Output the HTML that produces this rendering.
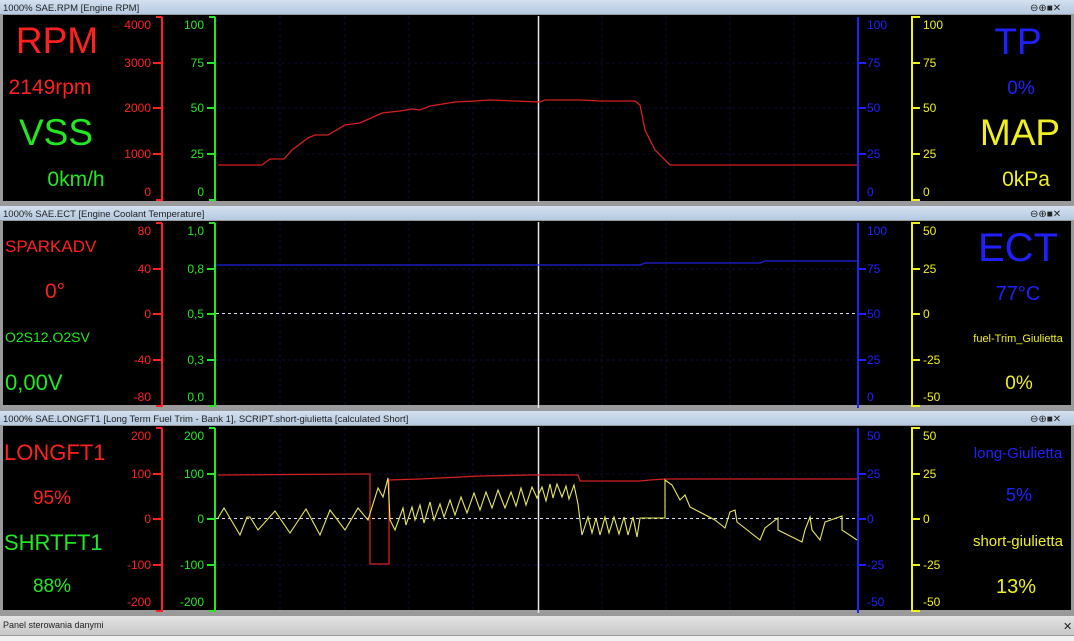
<!DOCTYPE html>
<html><head><meta charset="utf-8"><style>
html,body{margin:0;padding:0;width:1074px;height:641px;overflow:hidden;background:#9a9a9a;}
svg{display:block}
.t{font-family:"Liberation Sans",sans-serif}
</style></head><body>
<svg width="1074" height="641" viewBox="0 0 1074 641" xmlns="http://www.w3.org/2000/svg">
<defs>
<linearGradient id="tb" x1="0" y1="0" x2="0" y2="1"><stop offset="0" stop-color="#d3e1f0"/><stop offset="1" stop-color="#b4c9e0"/></linearGradient>
<linearGradient id="bb" x1="0" y1="0" x2="0" y2="1"><stop offset="0" stop-color="#e4e4e4"/><stop offset="1" stop-color="#c8c8c8"/></linearGradient>
<g id="grid">
<g stroke="#0c0c3a" stroke-width="1" stroke-dasharray="3,3">
<line x1="280" y1="0" x2="280" y2="184"/><line x1="345" y1="0" x2="345" y2="184"/><line x1="409" y1="0" x2="409" y2="184"/><line x1="473" y1="0" x2="473" y2="184"/><line x1="602" y1="0" x2="602" y2="184"/><line x1="666" y1="0" x2="666" y2="184"/><line x1="730" y1="0" x2="730" y2="184"/><line x1="794" y1="0" x2="794" y2="184"/>
<line x1="216" y1="47" x2="857" y2="47"/><line x1="216" y1="92" x2="857" y2="92"/><line x1="216" y1="138" x2="857" y2="138"/>
</g>
<line x1="538.5" y1="0" x2="538.5" y2="186" stroke="#e8e8e8" stroke-width="1.5"/>
<path d="M162 1 H156 M162 1 V184 H156 M153 47 H162 M153 92 H162 M153 138 H162" stroke="#ff2020" stroke-width="2" fill="none"/>
<path d="M215 1 H209 M215 1 V184 H209 M207 47 H215 M207 92 H215 M207 138 H215" stroke="#22e822" stroke-width="2" fill="none"/>
<path d="M858 1 V186 M858 47 H866 M858 92 H866 M858 138 H866" stroke="#2020ff" stroke-width="2" fill="none"/>
<path d="M920 1 H912 V184 H920 M912 47 H920 M912 92 H920 M912 138 H920" stroke="#f0f020" stroke-width="2" fill="none"/>
</g>
</defs>
<!-- panel 1 -->
<rect x="0" y="0" width="1074" height="14" fill="url(#tb)"/>
<text class="t" x="3" y="11" font-size="9.5" fill="#222">1000% SAE.RPM [Engine RPM]</text>
<text class="t" x="1030" y="11" font-size="10" fill="#222">⊖⊕■✕</text>
<rect x="3" y="15" width="1068" height="186" fill="#000"/>
<g transform="translate(0,16)"><use href="#grid"/></g>
<polyline fill="none" stroke="#d42020" stroke-width="1.3" points="218,165 262,165 270,159 284,159 292,150 308,138 315,135 328,135 345,125 360,123 382,113 400,111 412,109 420,110 430,106 455,102 475,101 490,100 540,102 545,100 580,100 600,101 635,101 640,105 645,130 655,150 670,165 857,165"/>
<g class="t" font-size="12">
<g fill="#ff2020" text-anchor="end"><text x="151" y="29">4000</text><text x="151" y="67">3000</text><text x="151" y="112">2000</text><text x="151" y="158">1000</text><text x="151" y="196">0</text></g>
<g fill="#22e822" text-anchor="end"><text x="204" y="29">100</text><text x="204" y="67">75</text><text x="204" y="112">50</text><text x="204" y="158">25</text><text x="204" y="196">0</text></g>
<g fill="#2020ff"><text x="867" y="29">100</text><text x="867" y="67">75</text><text x="867" y="112">50</text><text x="867" y="158">25</text><text x="867" y="196">0</text></g>
<g fill="#f0f020"><text x="923" y="29">100</text><text x="923" y="67">75</text><text x="923" y="112">50</text><text x="923" y="158">25</text><text x="923" y="196">0</text></g>
</g>
<g class="t" text-anchor="middle">
<text x="57" y="53" font-size="37" fill="#ff2020">RPM</text>
<text x="50" y="94" font-size="21" fill="#ff2020">2149rpm</text>
<text x="56" y="145" font-size="37" fill="#22e822">VSS</text>
<text x="76" y="186" font-size="21" fill="#22e822">0km/h</text>
<text x="1018" y="54" font-size="37" fill="#2020ff">TP</text>
<text x="1021" y="94" font-size="19" fill="#2020ff">0%</text>
<text x="1020" y="145" font-size="37" fill="#f0f020">MAP</text>
<text x="1026" y="186" font-size="21" fill="#f0f020">0kPa</text>
</g>
<!-- panel 2 -->
<rect x="0" y="206" width="1074" height="14" fill="url(#tb)"/>
<text class="t" x="3" y="217" font-size="9.5" fill="#222">1000% SAE.ECT [Engine Coolant Temperature]</text>
<text class="t" x="1030" y="217" font-size="10" fill="#222">⊖⊕■✕</text>
<rect x="3" y="221" width="1068" height="184" fill="#000"/>
<g transform="translate(0,222)"><use href="#grid"/></g>
<line x1="216" y1="313.5" x2="857" y2="313.5" stroke="#ddd" stroke-dasharray="3,3"/>
<polyline fill="none" stroke="#2020e0" stroke-width="1.3" points="216,265 640,265 645,263 760,263 765,261 857,261"/>
<g class="t" font-size="12">
<g fill="#ff2020" text-anchor="end"><text x="151" y="235">80</text><text x="151" y="273">40</text><text x="151" y="318">0</text><text x="151" y="364">-40</text><text x="151" y="401">-80</text></g>
<g fill="#22e822" text-anchor="end"><text x="204" y="235">1,0</text><text x="204" y="273">0,8</text><text x="204" y="318">0,5</text><text x="204" y="364">0,3</text><text x="204" y="401">0,0</text></g>
<g fill="#2020ff"><text x="867" y="235">100</text><text x="867" y="273">75</text><text x="867" y="318">50</text><text x="867" y="364">25</text><text x="867" y="401">0</text></g>
<g fill="#f0f020"><text x="923" y="235">50</text><text x="923" y="273">25</text><text x="923" y="318">0</text><text x="923" y="364">-25</text><text x="923" y="401">-50</text></g>
</g>
<g class="t">
<text x="5" y="252" font-size="17" fill="#ff2020">SPARKADV</text>
<text x="55" y="298" font-size="21" fill="#ff2020" text-anchor="middle">0°</text>
<text x="5" y="342" font-size="14" fill="#22e822">O2S12.O2SV</text>
<text x="5" y="390" font-size="22" fill="#22e822">0,00V</text>
<text x="1018" y="261" font-size="40" fill="#2020ff" text-anchor="middle">ECT</text>
<text x="1018" y="300" font-size="20" fill="#2020ff" text-anchor="middle">77°C</text>
<text x="1018" y="342" font-size="11" fill="#f0f020" text-anchor="middle">fuel-Trim_Giulietta</text>
<text x="1019" y="389" font-size="19" fill="#f0f020" text-anchor="middle">0%</text>
</g>
<!-- panel 3 -->
<rect x="0" y="411" width="1074" height="14" fill="url(#tb)"/>
<text class="t" x="3" y="422" font-size="9.5" fill="#222">1000% SAE.LONGFT1 [Long Term Fuel Trim - Bank 1], SCRIPT.short-giulietta [calculated Short]</text>
<text class="t" x="1030" y="422" font-size="10" fill="#222">⊖⊕■✕</text>
<rect x="3" y="426" width="1068" height="184" fill="#000"/>
<g transform="translate(0,427)"><use href="#grid"/></g>
<line x1="216" y1="518.5" x2="857" y2="518.5" stroke="#ddd" stroke-dasharray="3,3"/>
<polyline fill="none" stroke="#d42020" stroke-width="1.3" points="218,475 365,474 370,474 370,564 389,564 389,480 420,479 480,476 530,475 578,475 580,481 640,481 650,480 665,479 857,479"/>
<polyline fill="none" stroke="#e8e860" stroke-width="1.1" points="218,518 224,508 240,535 247,517 250,517 258,530 275,511 290,533 306,509 320,535 330,510 345,530 358,508 368,520 378,488 383,497 388,478 390,520 395,530 403,508 406,525 412,507 415,520 420,505 424,523 430,502 434,520 440,504 444,517 450,500 455,515 461,497 467,513 474,493 480,510 486,492 492,508 498,490 505,508 511,492 516,506 521,488 526,505 532,487 537,498 542,487 546,501 550,484 553,498 557,484 562,497 566,486 569,499 574,485 578,504 580,520 582,535 588,517 592,533 596,518 600,535 605,517 609,533 614,517 619,534 624,517 628,535 633,517 637,537 640,518 665,518 665,480 672,485 680,500 685,495 690,507 715,520 725,528 730,512 735,510 737,522 760,540 765,528 778,518 778,530 802,542 805,530 810,517 812,530 820,540 825,522 842,516 842,530 857,540"/>
<g class="t" font-size="12">
<g fill="#ff2020" text-anchor="end"><text x="151" y="440">200</text><text x="151" y="478">100</text><text x="151" y="523">0</text><text x="151" y="569">-100</text><text x="151" y="606">-200</text></g>
<g fill="#22e822" text-anchor="end"><text x="204" y="440">200</text><text x="204" y="478">100</text><text x="204" y="523">0</text><text x="204" y="569">-100</text><text x="204" y="606">-200</text></g>
<g fill="#2020ff"><text x="867" y="440">50</text><text x="867" y="478">25</text><text x="867" y="523">0</text><text x="867" y="569">-25</text><text x="867" y="606">-50</text></g>
<g fill="#f0f020"><text x="923" y="440">50</text><text x="923" y="478">25</text><text x="923" y="523">0</text><text x="923" y="569">-25</text><text x="923" y="606">-50</text></g>
</g>
<g class="t">
<text x="4" y="460" font-size="22" fill="#ff2020">LONGFT1</text>
<text x="52" y="504" font-size="19" fill="#ff2020" text-anchor="middle">95%</text>
<text x="4" y="550" font-size="22" fill="#22e822">SHRTFT1</text>
<text x="52" y="592" font-size="19" fill="#22e822" text-anchor="middle">88%</text>
<text x="1018" y="458" font-size="15" fill="#2020ff" text-anchor="middle">long-Giulietta</text>
<text x="1019" y="501" font-size="18" fill="#2020ff" text-anchor="middle">5%</text>
<text x="1018" y="546" font-size="15" fill="#f0f020" text-anchor="middle">short-giulietta</text>
<text x="1016" y="593" font-size="20" fill="#f0f020" text-anchor="middle">13%</text>
</g>
<!-- bottom -->
<rect x="0" y="616" width="1074" height="19" fill="url(#bb)"/>
<text class="t" x="3" y="628" font-size="9" fill="#222">Panel sterowania danymi</text>
<text class="t" x="1063" y="630" font-size="11" fill="#222">✕</text>
<rect x="0" y="636" width="1074" height="5" fill="#f2f2f2"/>
</svg>
</body></html>
